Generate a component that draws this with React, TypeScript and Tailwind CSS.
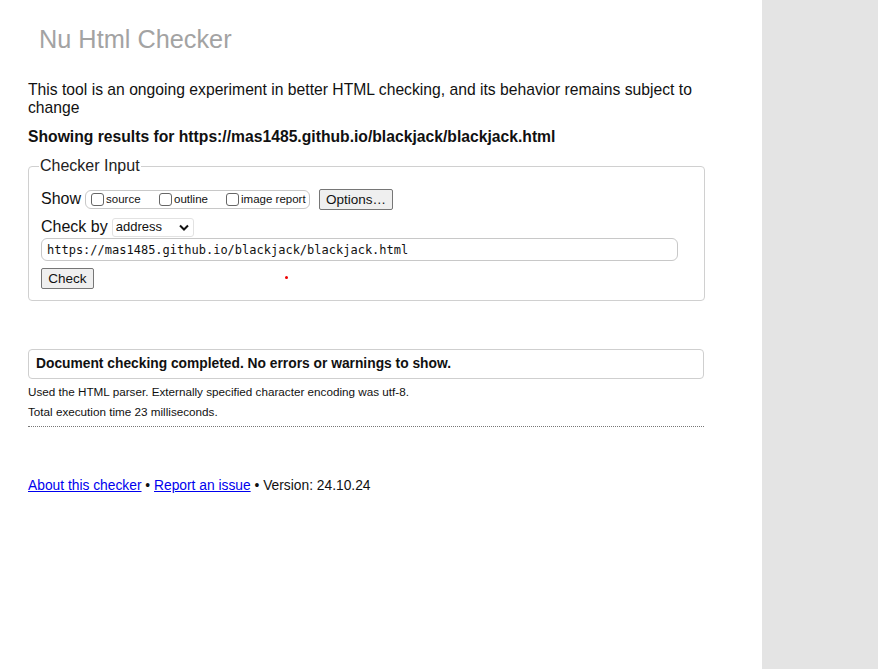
export default function App() {
  return (
    <div className="flex min-h-[669px] bg-white font-['Liberation_Sans',Arial,sans-serif] text-[#111]">
      <main className="w-[762px] shrink-0 pl-[28px] pr-[58px]">
        <h1 className="pt-[25px] pl-[11px] text-[25.3px] leading-[28px] text-[#a3a3a3]">Nu Html Checker</h1>

        <p className="mt-[28px] text-[15.7px] leading-[18px]">
          This tool is an ongoing experiment in better HTML checking, and its behavior remains subject to change
        </p>
        <p className="mt-[11px] text-[15.7px] font-bold leading-[18px]">
          Showing results for https://mas1485.github.io/blackjack/blackjack.html
        </p>

        {/* Checker input */}
        <fieldset className="mt-[11px] h-[144px] rounded-[4px] border border-[#d0d0d0] pl-[12px] pr-[26px]">
          <legend className="-mt-[1px] px-[1px] ml-[-2px] text-[16px] leading-[18px] text-[#222]">Checker Input</legend>

          <div className="mt-[13px] flex items-center h-[22px]">
            <span className="text-[16px]">Show</span>
            <div className="ml-[4px] flex h-[19px] w-[225px] items-center rounded-[6px] border border-[#c8c8c8] pl-[5px] text-[11.5px]">
              <span className="h-[13px] w-[13px] rounded-[3px] border border-[#666] bg-white" />
              <span className="ml-[2px] mt-[2px] w-[53px]">source</span>
              <span className="h-[13px] w-[13px] rounded-[3px] border border-[#666] bg-white" />
              <span className="ml-[2px] mt-[2px] w-[52px]">outline</span>
              <span className="h-[13px] w-[13px] rounded-[3px] border border-[#666] bg-white" />
              <span className="ml-[2px] mt-[2px]">image report</span>
            </div>
            <button className="ml-[9px] h-[21px] w-[74px] rounded-[2px] border border-[#767676] bg-[#efefef] text-[13.5px] leading-[19px]">
              Options…
            </button>
          </div>

          <div className="mt-[6px] flex h-[22px] items-center">
            <span className="text-[16px]">Check by</span>
            <div className="ml-[4px] flex h-[19px] w-[82px] items-center justify-between rounded-[3px] border border-[#e2e2e2] pl-[3px] pr-[4px] text-[13px]">
              <span>address</span>
              <svg width="10" height="7" viewBox="0 0 10 7">
                <path d="M1 1.5 L5 5.5 L9 1.5" fill="none" stroke="#111" strokeWidth="2" />
              </svg>
            </div>
          </div>

          <div className="flex h-[23px] w-[637px] items-center rounded-[6px] border border-[#c8c8c8] pl-[5px] font-['DejaVu_Sans_Mono',monospace] text-[12px]">
            https://mas1485.github.io/blackjack/blackjack.html
          </div>

          <div className="mt-[7px] flex items-center">
            <button className="h-[21px] w-[53px] rounded-[2px] border border-[#767676] bg-[#efefef] text-[13.5px] leading-[19px]">
              Check
            </button>
            <span className="ml-[191px] mt-[-2px] h-[3px] w-[3px] rounded-full bg-[#e00]" />
          </div>
        </fieldset>

        {/* Results */}
        <div className="mt-[48px] flex h-[30px] items-center rounded-[4px] border border-[#cfcfcf] pl-[7px] text-[13.8px] font-bold">
          Document checking completed. No errors or warnings to show.
        </div>
        <p className="mt-[6px] text-[11.7px] leading-[14px]">
          Used the HTML parser. Externally specified character encoding was utf-8.
        </p>
        <p className="mt-[6px] text-[11.7px] leading-[14px]">Total execution time 23 milliseconds.</p>
        <div className="mt-[7px] border-t border-dotted border-[#777]" />

        <p className="mt-[51px] text-[13.8px] leading-[16px]">
          <a href="#" className="text-[#0000ee] underline">About this checker</a>
          {" • "}
          <a href="#" className="text-[#0000ee] underline">Report an issue</a>
          {" • Version: 24.10.24"}
        </p>
      </main>
      <aside className="flex-1 bg-[#e4e4e4]" />
    </div>
  );
}
